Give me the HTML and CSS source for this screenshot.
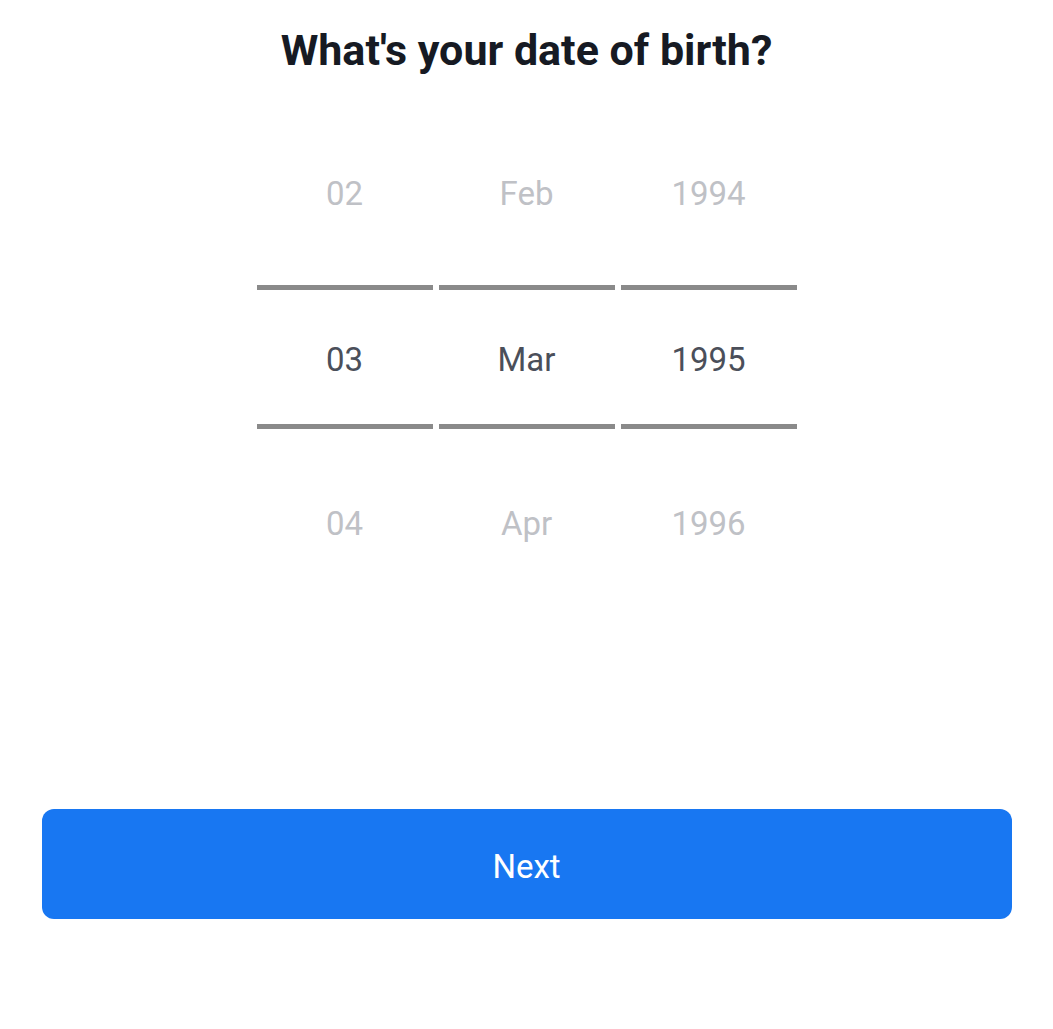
FILE: index.html
```html
<!DOCTYPE html>
<html>
<head>
<meta charset="utf-8">
<link rel="stylesheet" href="styles.css">
</head>
<body>
<div class="page">
  <h1 class="title">What's your date of birth?</h1>
  <div class="picker">
    <div class="col">
      <div class="cell faded">02</div>
      <div class="cell selected">03</div>
      <div class="cell faded">04</div>
    </div>
    <div class="col">
      <div class="cell faded">Feb</div>
      <div class="cell selected">Mar</div>
      <div class="cell faded">Apr</div>
    </div>
    <div class="col">
      <div class="cell faded">1994</div>
      <div class="cell selected">1995</div>
      <div class="cell faded">1996</div>
    </div>
  </div>
  <div class="actions">
    <button class="next">Next</button>
  </div>
</div>
</body>
</html>
```

FILE: styles.css
```css
html, body {
  margin: 0;
  padding: 0;
  background: #ffffff;
}
.page {
  width: 1053px;
  min-height: 1029px;
  font-family: Roboto, "Liberation Sans", sans-serif;
  display: flex;
  flex-direction: column;
  align-items: center;
}
.title {
  margin: 25px 0 0;
  font-size: 43px;
  font-weight: 700;
  line-height: 50px;
  color: #161a23;
  letter-spacing: 0;
}
.picker {
  margin-top: 36px;
  display: flex;
  gap: 6px;
}
.col {
  width: 176px;
  display: flex;
  flex-direction: column;
}
.cell {
  height: 165px;
  display: flex;
  align-items: center;
  justify-content: center;
  font-size: 33px;
  font-weight: 400;
}
.faded {
  color: #bfc1c6;
}
.selected {
  height: 130px;
  padding-top: 4px;
  margin: 9px 0 12px;
  border-top: 5px solid #8a8a8a;
  border-bottom: 5px solid #8a8a8a;
  color: #4b4f5a;
}
.actions {
  margin-top: 203px;
  width: 970px;
}
.next {
  width: 100%;
  height: 110px;
  border: none;
  border-radius: 12px;
  background: #1877f2;
  color: #ffffff;
  font-family: Roboto, "Liberation Sans", sans-serif;
  font-size: 33px;
  font-weight: 400;
  padding: 4px 0 0;
}
```
